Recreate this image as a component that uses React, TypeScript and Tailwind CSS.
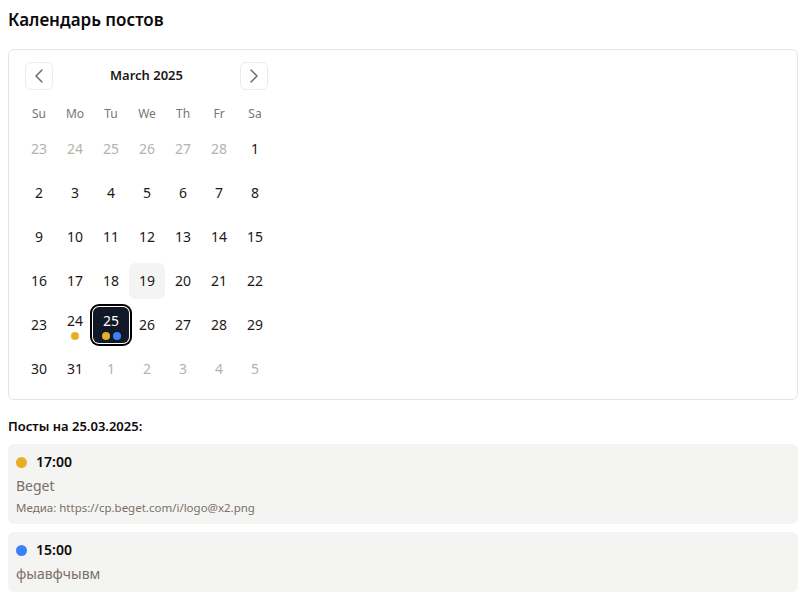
import { ChevronLeft, ChevronRight } from "lucide-react";

type Day = { n: number; muted?: boolean; dots?: string[] };

const weekDays = ["Su", "Mo", "Tu", "We", "Th", "Fr", "Sa"];

function buildDays(): Day[] {
  const days: Day[] = [];
  for (let n = 23; n <= 28; n++) days.push({ n, muted: true });
  for (let n = 1; n <= 31; n++) {
    const d: Day = { n };
    if (n === 24) d.dots = ["bg-[#e6b025]"];
    if (n === 25) d.dots = ["bg-[#e6b025]", "bg-[#3b82f6]"];
    days.push(d);
  }
  for (let n = 1; n <= 5; n++) days.push({ n, muted: true });
  return days;
}

function DayCell({ day }: { day: Day }) {
  const selected = !day.muted && day.n === 25;
  const today = !day.muted && day.n === 19;
  return (
    <div className="flex items-center justify-center">
      <div
        className={
          "w-9 h-9 rounded-md flex flex-col items-center justify-center text-sm " +
          (selected
            ? "bg-[#111827] text-white ring-2 ring-black ring-offset-1 ring-offset-white"
            : today
              ? "bg-[#f4f4f3] text-[#1c1917]"
              : day.muted
                ? "text-[#b5b2ae]"
                : "text-[#1c1917]")
        }
      >
        <span className="leading-5">{day.n}</span>
        {day.dots && (
          <div className="flex gap-[3px] mt-[1px]">
            {day.dots.map((c, i) => (
              <span key={i} className={"w-2 h-2 rounded-full " + c} />
            ))}
          </div>
        )}
      </div>
    </div>
  );
}

function Calendar() {
  const days = buildDays();
  return (
    <div className="border border-[#e5e5e5] rounded-md p-3">
      <div className="w-[252px]">
        <div className="flex items-center justify-between pl-1 pr-[5px] h-7">
          <button className="w-7 h-7 rounded-md border border-[#ececec] flex items-center justify-center text-[#6b6b6b]">
            <ChevronLeft size={24} strokeWidth={1.5} />
          </button>
          <div className="text-[13px] font-semibold text-[#1c1917]">March 2025</div>
          <button className="w-7 h-7 rounded-md border border-[#ececec] flex items-center justify-center text-[#6b6b6b]">
            <ChevronRight size={24} strokeWidth={1.5} />
          </button>
        </div>
        <div className="grid grid-cols-7 mt-[14px] h-5 items-center">
          {weekDays.map((w) => (
            <div key={w} className="text-center text-[12px] text-[#7a746f]">
              {w}
            </div>
          ))}
        </div>
        <div className="grid grid-cols-7 gap-y-2 mt-[7px]">
          {days.map((d, i) => (
            <DayCell key={i} day={d} />
          ))}
        </div>
      </div>
    </div>
  );
}

function PostCard({ color, time, text, media }: { color: string; time: string; text: string; media?: string }) {
  return (
    <div className="bg-[#f4f4f3] rounded-md px-2 py-2">
      <div className="flex items-center gap-[9px] h-5">
        <span className={"w-[11px] h-[11px] rounded-full " + color} />
        <span className="text-sm font-semibold text-[#0c0a09]">{time}</span>
      </div>
      <div className="mt-1 text-sm leading-5 text-[#7a6f68]">{text}</div>
      {media && <div className="mt-1 text-[11.5px] leading-4 text-[#7a6f68]">Медиа: {media}</div>}
    </div>
  );
}

export default function App() {
  return (
    <div className="w-[808px] min-h-[603px] bg-white pl-2 pr-[10px] pt-2 font-['Noto_Sans',sans-serif] text-[#1c1917]">
      <h1 className="text-[17px] font-semibold leading-6 text-[#0c0a09]">Календарь постов</h1>
      <div className="mt-[17px]">
        <Calendar />
      </div>
      <div className="mt-4 text-[13px] font-semibold leading-5 text-[#0c0a09]">Посты на 25.03.2025:</div>
      <div className="mt-2 flex flex-col gap-2">
        <PostCard color="bg-[#e6b025]" time="17:00" text="Beget" media="https://cp.beget.com/i/logo@x2.png" />
        <PostCard color="bg-[#3b82f6]" time="15:00" text="фыавфчывм" />
      </div>
    </div>
  );
}
